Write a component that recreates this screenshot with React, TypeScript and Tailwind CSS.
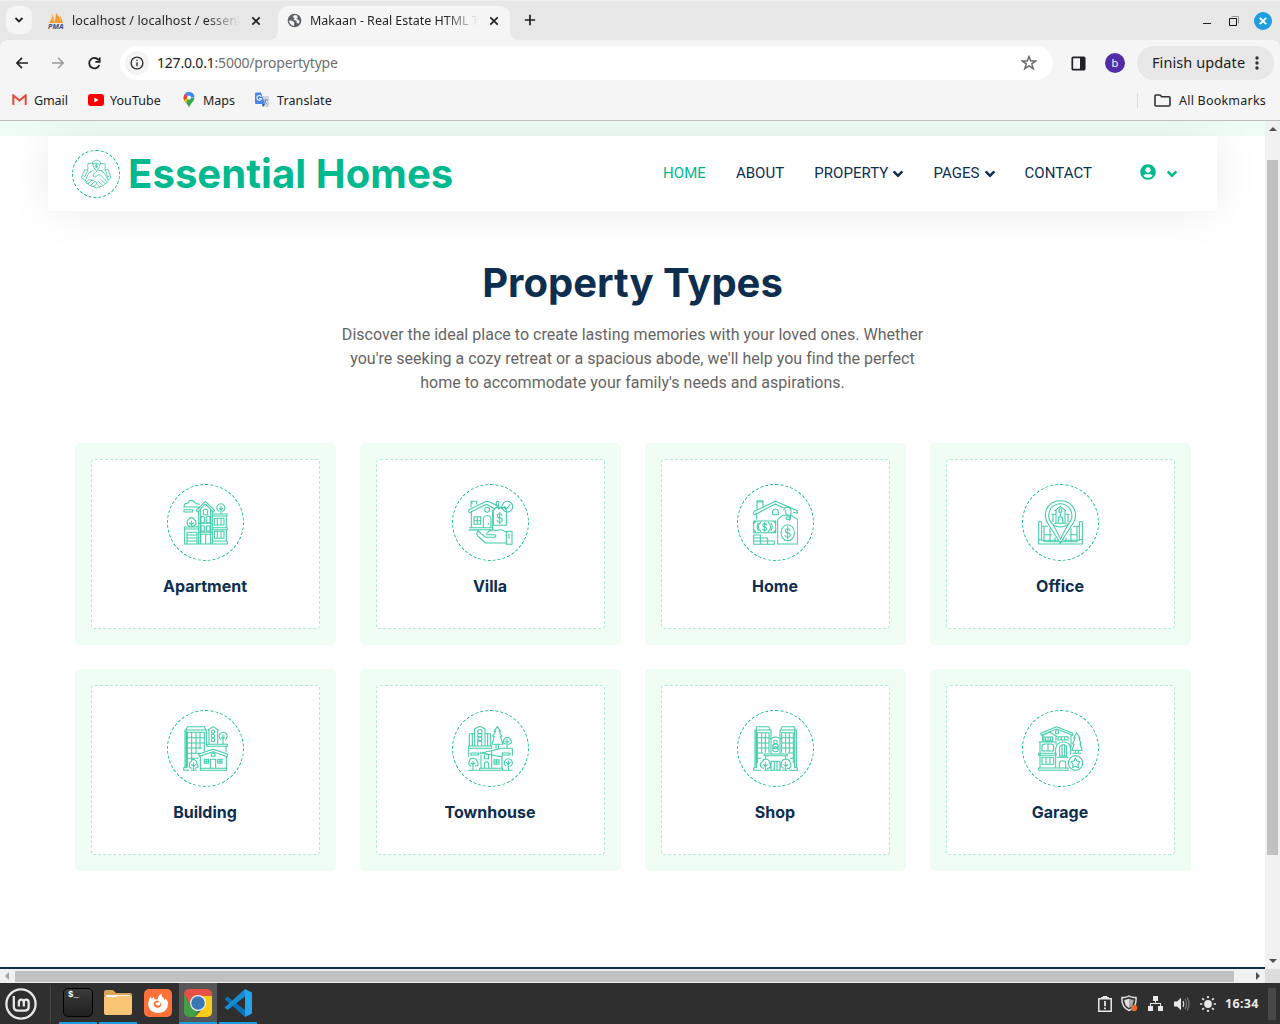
import React from "react";
import { FaAngleDown, FaUserCircle } from "react-icons/fa";

const ui = "font-['Noto_Sans',sans-serif]";

type LineProps = { box: string; d: string; size?: string; width?: number };

function LineIcon({ box, d, size = "size-[45px]", width = 3.2 }: LineProps) {
  return (
    <svg viewBox={box} className={`${size} text-[#00B98E]/75`} fill="none" stroke="currentColor" strokeWidth={width} strokeLinejoin="round" strokeLinecap="round">
      <path d={d} />
    </svg>
  );
}

const TOP = "99 90 135 135";
const LOW = "99 78 135 135";

const types = [
  {
    name: "Apartment",
    box: TOP,
    d: "M101 111H150M104 111A7 7 0 0 1 108 100Q113 101 115 98A10 10 0 0 1 134 98Q138 101 148 103M102 119H128M102 126H128M128 119V126M102 119V126M139 121L166 94 194 121 190 126 166 102 143 126ZM146 124V222M187 122V222M151 120V222M182 120V222M160 134V124A6 6 0 0 1 173 124V134ZM153 158V144A5 5 0 0 1 163 144V158ZM169 158V144A5 5 0 0 1 180 144V158ZM153 183V168H163V183ZM169 183V168H180V183ZM146 160H187M146 187H187M152 222V193H182V222M167 193V222M188 132H231V138H188M188 173H232V179H188M188 213H232V222H188M229 138V173M229 179V213M193 145H222V165H193ZM202 145V165M213 145V165M193 184H222V205H193ZM202 184V205M213 184V205M103 171H146V177H103ZM104 177V222M111 187H141V222H111ZM111 195H141M111 204H141M111 213H141M103 222H232M119 168A8 8 0 0 1 112 158Q109 151 116 149A9 9 0 0 1 133 149Q140 153 137 163Q134 169 127 168M124 153V171M118 159L124 164 130 159M207 124A12 12 0 1 1 218 124M213 109V132M208 115L213 120 218 115",
  },
  {
    name: "Villa",
    box: TOP,
    d: "M108 111V94H125V102M111 99V94M102 119L151 95Q156 92 162 95L190 109M102 119Q100 125 103 128L155 103 178 116M109 126V171M104 173H173V179H102M173 120V171M117 140H137V163H117ZM127 140V163M117 152H137M145 172V148A11 11 0 0 1 168 148V172M160 160V163M149 119A7 7 0 1 1 164 119A7 7 0 1 1 149 119M175 121L183 112H208L214 121V166H175ZM191 117A4 4 0 1 1 198 117M194 116Q181 107 184 97Q187 91 192 96L190 107M201 136Q200 131 194 131Q187 131 187 137Q187 143 194 143Q202 143 202 150Q201 157 194 157Q187 157 186 151M194 127V161M201 110A16 16 0 1 1 233 110A16 16 0 1 1 201 110M209 110L215 116 225 104M102 180H127L151 202H179Q187 197 179 194H155M155 190L163 183Q175 178 183 182L191 180Q201 177 210 185H219M128 185Q121 193 132 201L151 219H214M214 184H231V223H214ZM222 191V205",
  },
  {
    name: "Home",
    box: TOP,
    d: "M111 116V92H129V107M111 96H129M102 124L166 94 232 122V130L220 127M102 124Q99 132 104 134L166 102 190 113M110 132V147M158 134V123A9 9 0 0 1 175 123V134ZM101 153H167V188H101ZM101 161L109 153M101 179L109 188M160 153L167 161M160 188L167 180M115 159Q108 171 115 181M153 159Q160 171 153 181M122 157Q108 170 122 184M145 157Q159 170 145 184M140 164Q134 158 129 163Q127 170 134 171Q142 173 139 179Q134 184 128 178M134 158V184M101 195H121V223H101ZM101 204H143V223M101 213H163V223H101M121 213V223M143 213V223M173 148L188 136H214L233 149V222H173ZM183 188A20 24 0 1 0 223 188A20 24 0 1 0 183 188M210 181Q209 176 203 176Q196 176 196 182Q196 188 203 189Q211 190 211 196Q210 202 203 202Q196 202 195 196M203 171V207M199 149A6 6 0 1 1 208 151M192 121Q191 113 201 112Q214 113 213 125L211 143Q208 150 203 148M197 121V131L204 137",
  },
  {
    name: "Office",
    box: TOP,
    d: "M166 220L129 161Q117 143 123 122Q133 92 166 92Q198 92 209 120Q215 140 206 157ZM131 136A35 35 0 1 1 201 136A35 35 0 1 1 131 136M137 153Q160 190 166 208 177 184 195 154M150 122L166 109 182 122M153 121V160H180V121M140 133H153M180 133H193M144 134V155M189 134V155M162 126V120A4 4 0 0 1 170 120V126ZM160 160V147A6 6 0 0 1 173 147V160M166 126V141M149 160H184M101 155V222H232V155M101 157A5 4 0 0 1 110 157V211H158M232 157A5 4 0 0 0 223 157V211H175M111 169H128M205 169H223M117 170V215H216V170M117 194H139M195 194H216M135 176V215M198 176V215M150 203V215M183 204V215M101 213Q101 206 110 210M232 213Q232 206 223 210",
  },
  {
    name: "Building",
    box: LOW,
    d: "M105 90H169V134M109 88L112 80H163L167 89M105 90V203M109 93V203M112 97H163V152M112 97V200M112 113H163M112 129H163M112 144H154M112 160H148M112 175H144M125 97V184M138 97V160M150 97V147M174 90L189 80 205 90M177 90V132M203 90V132M184 95A5 5 0 1 1 194 95A5 5 0 1 1 184 95M184 108A5 5 0 1 1 194 108A5 5 0 1 1 184 108M184 120A5 5 0 1 1 194 120A5 5 0 1 1 184 120M171 133H232V139H171ZM228 139V155M213 119A12 12 0 1 1 226 119M219 104V131M214 112L219 116 224 112M146 162L189 148 232 162V170L189 155 148 169ZM151 170V205M229 170V205M151 205H230V211H151ZM181 205V178H197V205M163 178H176V190H163ZM203 178H216V190H203ZM169 178V190M210 178V190M163 184H176M203 184H216M184 169V163A6 5 0 0 1 195 163V169ZM101 211V205Q101 201 107 202M101 211H116M124 211H139M126 205Q115 203 119 192Q117 187 124 185Q127 174 137 181Q142 187 140 191Q151 202 136 205M131 188V211M125 194L131 199 137 194",
  },
  {
    name: "Townhouse",
    box: "954 78 135 135",
    d: "M958 137V101H973M1006 101H1021V137M974 86L989 79 1005 86V92M974 86V137M1005 91V137M983 95A6 6 0 1 1 996 95A6 6 0 1 1 983 95M983 106A6 6 0 1 1 996 106A6 6 0 1 1 983 106M983 117A6 6 0 1 1 996 117A6 6 0 1 1 983 117M983 137V127A6 6 0 0 1 995 127V137M967 101V137M1013 101V137M956 138H1025V145H956ZM956 145V169M1087 148V166M963 159H986V165H963ZM1057 159H1080V165H1057ZM991 160L1056 145H1087M993 165V205M991 158L1057 171M1025 153V205M1056 168V205M989 205H1058V211H989ZM1003 205V190A7 7 0 0 1 1016 190V205M1003 176V167A7 7 0 0 1 1016 167V176ZM1032 179H1047V193H1032ZM1039 179V193M1032 186H1047M1042 80L1032 94H1037L1028 109H1033L1026 133H1059L1051 109H1056L1047 94H1052ZM1038 134V145M1045 134V145M1066 132A8 8 0 0 1 1060 122Q1062 120 1063 118A9 9 0 0 1 1080 118Q1091 130 1075 133M1071 117V145M1065 124L1071 128 1077 124M963 198Q953 194 958 185Q958 176 967 175Q979 175 981 184Q990 197 975 198M969 184V211M963 189L969 194 975 189M1068 198A12 12 0 1 1 1082 198M1075 182V211M1069 188L1075 193 1081 188M956 211H986M1061 211H1086",
  },
  {
    name: "Shop",
    box: LOW,
    d: "M105 90H153V112M180 112V90H229M109 89V82Q109 80 112 80H147L150 89M183 89L186 80H222L226 89M105 90V202M229 90V202M109 93V202M224 93V202M112 98H147V157M112 98V188M220 98V188M185 98H220M185 98V157M112 113H147M112 129H147M112 144H147M112 159H128M185 113H220M185 129H220M185 144H220M205 159H220M125 98V157M136 98V157M197 98V157M208 98V157M112 175H122M211 175H220M150 116L167 110 183 116M153 117V160M180 117V160M161 126A5 5 0 1 1 172 126A5 5 0 1 1 161 126M158 139A8 7 0 1 1 175 139A8 7 0 1 1 158 139M158 148A8 7 0 1 1 175 148A8 7 0 1 1 158 148M132 162H202V167H132ZM137 168V174M197 168V174M153 211V184H180V211M163 184V211M171 184V211M101 211V205Q102 202 109 203M232 211V205Q231 202 224 203M101 211H123M134 211H146M151 211H182M187 211H201M207 211H232M130 205Q119 202 122 192Q121 187 128 185Q129 177 137 177Q148 178 148 187Q157 204 141 206M136 187V211M130 194L136 199 142 194M192 205Q181 202 184 192Q184 178 197 177Q208 178 210 187Q218 204 202 206M197 187V211M191 194L197 199 203 194",
  },
  {
    name: "Garage",
    box: "954 78 135 135",
    d: "M962 100L1010 80 1058 100V106L1010 87 964 106ZM968 105L989 97 1010 109M968 105V124M1053 106V141M972 108V124M1008 108V122M977 111H998V123H977ZM984 111V123M991 111V123M1014 110H1044V120H1014ZM1024 110V120M1034 110V120M1006 97A5 5 0 1 1 1016 97A5 5 0 1 1 1006 97M958 126H1008V132M960 126V202M956 160H1008V166H956ZM966 153V140Q966 132 975 132H993Q1001 132 1001 140V153ZM984 132V153M966 172H1001V193H966ZM978 172V193M990 172V193M1007 203V145Q1010 126 1030 126Q1050 126 1052 145V163M1019 168V143Q1019 134 1030 134Q1040 134 1040 143V168ZM1026 135V168M1034 135V168M1011 172H1044M1018 205V190Q1019 182 1028 182Q1037 182 1037 190V205M956 204H1044V211H956ZM1045 189A21.5 21.5 0 1 1 1088 189A21.5 21.5 0 1 1 1045 189M1066 175L1071 183 1080 185 1074 193 1075 203 1066 199 1058 203 1059 193 1053 185 1062 183ZM1070 98L1061 114H1065L1058 132H1062L1056 151H1087L1080 132H1083L1077 114H1080ZM1066 152V159M1075 152V159M1059 160H1083",
  },
];

function TypeCard({ name, box, d }: { name: string; box: string; d: string }) {
  return (
    <a className="block h-[202px] rounded-[5px] bg-[#EFFDF5] p-4">
      <div className="flex h-[170px] flex-col items-center rounded-[4px] border border-dashed border-[#00B98E]/30 bg-white pt-6">
        <div className="flex size-[77px] items-center justify-center rounded-full border border-dashed border-[#00B98E]">
          <LineIcon box={box} d={d} />
        </div>
        <h6 className="mt-4 font-['Inter',sans-serif] text-base leading-[19px] font-bold text-[#0E2E50]">{name}</h6>
      </div>
    </a>
  );
}

function Cross() {
  return (
    <svg viewBox="0 0 10 10" className="size-[10px] shrink-0" stroke="#202124" strokeWidth="1.7">
      <path d="M1.3 1.3 8.7 8.7M8.7 1.3 1.3 8.7" />
    </svg>
  );
}

function TabStrip() {
  return (
    <div className="flex h-10 border-t border-[#efefef] bg-[#e7e7e7] text-[12.5px] text-[#202124]">
      <div className="mt-[5px] ml-[6px] flex h-7 w-[26px] items-center justify-center rounded-[9px] bg-[#f5f5f5]">
        <svg viewBox="0 0 10 10" className="size-[10px]" fill="none" stroke="#202124" strokeWidth="1.8"><path d="M1.5 3 5 6.5 8.5 3" /></svg>
      </div>
      <div className="flex w-[246px] items-center pl-4">
        <svg viewBox="0 0 16 16" className="size-4 shrink-0">
          <path d="M1 10Q4 6 5 1L6 10ZM6 10Q8 5 8 0 12 4 13 10ZM12 2Q14 6 15 10H13Z" fill="#f79a28" />
          <text x="0" y="15.8" fontSize="6.5" fontWeight="bold" fontStyle="italic" fill="#4b4b78" fontFamily="Noto Sans" textLength="15.5" lengthAdjust="spacingAndGlyphs">PMA</text>
        </svg>
        <span className="ml-2 w-[168px] overflow-hidden bg-gradient-to-r from-[#202124] from-80% to-transparent bg-clip-text pt-px whitespace-nowrap text-transparent tracking-[0.12px]">localhost / localhost / essential</span>
        <span className="ml-[11px]"><Cross /></span>
      </div>
      <div className="relative mt-[5px] flex h-[34px] w-[232px] items-center rounded-t-[10px] bg-[#f5f5f5] pb-[5px] pl-[9px]">
        <svg viewBox="0 0 10 10" className="absolute bottom-0 -left-[10px] size-[10px]"><path d="M10 0V10H0Q10 10 10 0" fill="#f5f5f5" /></svg>
        <svg viewBox="0 0 10 10" className="absolute -right-[10px] bottom-0 size-[10px]"><path d="M0 0V10H10Q0 10 0 0" fill="#f5f5f5" /></svg>
        <svg viewBox="0 0 16 16" className="size-[15px] shrink-0">
          <circle cx="8" cy="8" r="7.3" fill="#5f6368" />
          <path d="M8 2.2 6 4.3 8.2 5.5 7 7.3 10.5 8.5 10 10.2 12 11.5 13.5 9.2 12 7 9.6 6.5 11.5 5 10.7 2.7ZM2.2 8 5.5 8.3 7.8 10.2 7.5 13.6 5 13 2.5 10.5Z" fill="#f5f5f5" />
        </svg>
        <span className="ml-2 w-[168px] overflow-hidden bg-gradient-to-r from-[#202124] from-80% to-transparent bg-clip-text pt-px whitespace-nowrap text-transparent tracking-[-0.02px]">Makaan - Real Estate HTML Template</span>
        <span className="ml-[11px]"><Cross /></span>
      </div>
      <svg viewBox="0 0 12 12" className="mt-[13px] ml-[14px] size-3" stroke="#202124" strokeWidth="1.7"><path d="M6 .8V11.2M.8 6H11.2" /></svg>
      <div className="ml-auto flex items-center gap-[18px] pr-2">
        <span className="mt-[5px] h-px w-2 bg-[#202124]" />
        <svg viewBox="0 0 10 10" className="size-[10px]" fill="none"><path d="M.5 2.5H7.5V9.5H.5Z" stroke="#111" /><path d="M2.5.5H9.5V7.5" stroke="#999" /></svg>
        <span className="-ml-[3px] flex size-[18px] items-center justify-center rounded-full bg-[#1f9ede]">
          <svg viewBox="0 0 8 8" className="size-2" stroke="white" strokeWidth="1.9"><path d="M.8.8 7.2 7.2M7.2.8.8 7.2" /></svg>
        </span>
      </div>
    </div>
  );
}

function Toolbar() {
  return (
    <div className="flex h-[46px] items-center bg-[#f5f5f5] text-[#202124]">
      <svg viewBox="0 0 12 12" className="ml-4 size-3" fill="none" stroke="#202124" strokeWidth="1.7"><path d="M12 6H1.2M6 .8.9 6 6 11.2" /></svg>
      <svg viewBox="0 0 12 12" className="ml-6 size-3" fill="none" stroke="#9a9a9a" strokeWidth="1.5"><path d="M0 6H10.8M6 .8 11.1 6 6 11.2" /></svg>
      <svg viewBox="0 0 13 13" className="ml-6 size-[13px]" fill="none" stroke="#202124" strokeWidth="1.8"><path d="M11.3 8A5.2 5.2 0 1 1 10.7 3.2M11.7.6V4.9H7.4" /></svg>
      <div className="ml-[19px] flex h-[34px] w-[933px] items-center rounded-full bg-white pl-[5px]">
        <span className="flex size-6 items-center justify-center rounded-full bg-[#f4f4f4]">
          <svg viewBox="0 0 14 14" className="size-[14px]" fill="none" stroke="#303134" strokeWidth="1.4"><circle cx="7" cy="7" r="5.9" /><path d="M7 6.2V10.2M7 3.7V5.1" /></svg>
        </span>
        <span className="mb-[2px] ml-2 text-[14px] tracking-[-0.2px] text-[#202124]">127.0.0.1<span className="text-[#6d6e70]">:5000/propertytype</span></span>
        <svg viewBox="0 0 16 16" className="mr-4 ml-auto size-4" fill="none" stroke="#6b6b6b" strokeWidth="1.5"><path d="M8 1.6 9.8 6H14.6L10.8 8.9 12.2 13.7 8 10.9 3.8 13.7 5.2 8.9 1.4 6H6.2Z" /></svg>
      </div>
      <svg viewBox="0 0 15 15" className="ml-[18px] size-[15px]"><rect x="1.3" y="1.3" width="12.4" height="12.4" rx="1" fill="none" stroke="#202124" strokeWidth="1.7" /><path d="M9 1H14V14H9Z" fill="#202124" /></svg>
      <span className="ml-[19px] flex size-5 items-center justify-center rounded-full bg-[#512da8] text-[11px] text-white">b</span>
      <div className="ml-3 flex h-[34px] w-[137px] items-center rounded-full bg-[#e7e7e7] pl-[15px]">
        <span className="text-[14.5px] tracking-[0.09px] whitespace-nowrap">Finish update</span>
        <svg viewBox="0 0 4 14" className="mr-[15px] ml-auto h-[14px] w-1" fill="#303134"><circle cx="2" cy="2" r="1.7" /><circle cx="2" cy="7" r="1.7" /><circle cx="2" cy="12" r="1.7" /></svg>
      </div>
    </div>
  );
}

function Bookmarks() {
  return (
    <div className="flex h-[35px] items-center border-b border-[#bdbdbd] bg-[#f5f5f5] pb-[6px] text-[12.5px] text-[#202124]">
      <div className="flex w-[76px] items-center gap-[7px] pl-3">
        <svg viewBox="0 0 15 12" className="h-[12px] w-[15px] shrink-0"><path d="M1 1H14V11H1Z" fill="#eee" /><path d="M1.3 11V1.4L7.5 6.5 13.7 1.4V11" fill="none" stroke="#e04a3f" strokeWidth="2" /></svg>
        <span className="mt-[2px] tracking-[-0.1px]">Gmail</span>
      </div>
      <div className="flex w-[105px] items-center gap-[6px] pl-3">
        <svg viewBox="0 0 16 12" className="h-3 w-4 shrink-0"><rect width="16" height="12" rx="3" fill="#f00" /><path d="M6.3 3.5 10.5 6 6.3 8.5Z" fill="#fff" /></svg>
        <span className="mt-[2px] tracking-[0.05px]">YouTube</span>
      </div>
      <div className="flex w-[73px] items-center gap-2 pl-[2px]">
        <svg viewBox="0 0 12 16" className="h-4 w-3 shrink-0">
          <path d="M6 16C5 11 .5 10 .5 5.5L11.5 5.5C11.5 10 7 11 6 16" fill="#34a853" />
          <path d="M1 7.5 6 5.5 3 11Q1.5 9 1 7.5" fill="#fbbc04" />
          <path d="M.5 5.5A5.5 5.5 0 0 1 2 1.7L6 5.5 1 8Z" fill="#ea4335" />
          <path d="M2 1.7A5.5 5.5 0 0 1 11.5 5L6 5.5Z" fill="#4285f4" />
          <circle cx="6" cy="5.5" r="2" fill="#fff" />
        </svg>
        <span className="mt-[2px]">Maps</span>
      </div>
      <div className="flex items-center gap-[7px]">
        <svg viewBox="0 0 16 16" className="size-4 shrink-0">
          <path d="M6 4H14Q15 4 15 5V14Q15 15 14 15H9Z" fill="#d3d6dc" /><path d="M9.5 8H14M12 7V8Q11.5 11 9.5 12M10.5 9.5 13.5 12.5" stroke="#7890a8" strokeWidth=".9" fill="none" />
          <path d="M2 .5H7L11 12H2Q1 12 1 11V1.5Q1 .5 2 .5" fill="#4a87ec" /><path d="M8 12H11L9 15Z" fill="#2858b8" />
          <path d="M7.2 4.7A2.3 2.3 0 1 0 7.4 6.5H5.3" stroke="#fff" strokeWidth="1.1" fill="none" />
        </svg>
        <span className="mt-[2px] tracking-[0.12px]">Translate</span>
      </div>
      <div className="ml-auto flex items-center pr-[14px]">
        <span className="mr-4 h-[15px] w-px bg-[#dcdcdc]" />
        <svg viewBox="0 0 17 13" className="h-[13px] w-[17px]" fill="none" stroke="#303134" strokeWidth="1.6"><path d="M1 2Q1 1 2 1H6L7.7 2.8H15Q16 2.8 16 3.8V11Q16 12 15 12H2Q1 12 1 11Z" /></svg>
        <span className="mt-[2px] ml-2 tracking-[0.22px]">All Bookmarks</span>
      </div>
    </div>
  );
}

const navLink = "flex items-center gap-[5px]";

function SiteHeader() {
  return (
    <header className="mx-12 flex h-[75px] w-[1169px] items-center bg-white px-6 shadow-[0_0_45px_rgba(0,0,0,0.08)]">
      <div className="flex size-12 items-center justify-center rounded-full border border-dashed border-[#00B98E]">
        <LineIcon
          box="121 146 92 92"
          size="size-[30px]"
          width={2.4}
          d="M156 160V156Q168 143 181 156V161M158 160H142V180L133 178 122 204 134 211M180 160H195V180L204 178 213 204 204 211M158 164Q159 178 168 181Q178 176 179 164L168 158ZM168 161V173M164 165H172M164 170H172M134 211L144 191 152 183M204 211L194 191 184 182 174 180 162 189Q155 196 160 201Q166 202 173 195H181L202 217M134 211Q139 213 136 219Q138 225 145 220Q142 228 152 226Q151 234 160 230Q160 235 168 235L176 232 186 229 194 223 202 217M145 220L154 210Q145 206 136 217M152 226L163 214Q158 209 153 212M160 230L171 220Q168 214 163 216M177 230L169 222M185 226L175 215M194 220L181 208M142 180L133 200 128 197M195 180L203 202 209 198M148 188L158 181M188 187L182 182"
        />
      </div>
      <h1 className="ml-2 font-['Inter',sans-serif] text-[40px] leading-[48px] font-bold tracking-[0.09px] whitespace-nowrap text-[#00B98E]">Essential Homes</h1>
      <nav className="ml-auto flex items-center gap-[30px] pr-4 font-['Roboto',sans-serif] text-[15px] font-[450] tracking-[0.05px] text-[#0E2E50]">
        <a className="text-[#00B98E]">HOME</a>
        <a>ABOUT</a>
        <a className={navLink}>PROPERTY<FaAngleDown className="mt-px size-[10px] scale-[1.6]" /></a>
        <a className={navLink}>PAGES<FaAngleDown className="mt-px size-[10px] scale-[1.6]" /></a>
        <a>CONTACT</a>
        <a className="ml-[18px] flex items-center gap-[11px] text-[#00B98E]"><FaUserCircle className="mb-[3px] size-4" /><FaAngleDown className="mt-px size-[10px] scale-[1.6]" /></a>
      </nav>
    </header>
  );
}

function Page() {
  return (
    <main className="relative flex w-[1265px] flex-col overflow-hidden bg-white">
      <div className="h-[15px] shrink-0 bg-[#EFFDF5]" />
      <SiteHeader />
      <section className="flex flex-col items-center pt-12">
        <h2 className="font-['Inter',sans-serif] text-[40px] leading-[48px] font-bold text-[#0E2E50]">Property Types</h2>
        <p className="mt-4 w-[600px] text-center font-['Roboto',sans-serif] text-base leading-6 tracking-[0.02px] text-[#666565]">
          Discover the ideal place to create lasting memories with your loved ones. Whether you're seeking a cozy retreat or a spacious abode, we'll help you find the perfect home to accommodate your family's needs and aspirations.
        </p>
        <div className="mt-12 grid w-[1116px] grid-cols-4 gap-6">
          {types.map((t) => <TypeCard key={t.name} {...t} />)}
        </div>
      </section>
      <footer className="mt-auto h-[2px] shrink-0 bg-[#0E2E50]" />
    </main>
  );
}

function Scrollbar() {
  return (
    <div className="flex w-[15px] flex-col items-center bg-[#f1f1f1]">
      <svg viewBox="0 0 8 4" className="mt-[6px] h-1 w-2" fill="#505050"><path d="M0 4 4 0 8 4Z" /></svg>
      <div className="mt-[29px] h-[695px] w-[11px] bg-[#c1c1c1]" />
      <svg viewBox="0 0 8 4" className="mt-auto mb-[6px] h-1 w-2" fill="#505050"><path d="M0 0 4 4 8 0Z" /></svg>
    </div>
  );
}

function HorizontalBar() {
  return (
    <div className="flex h-[14px] items-center bg-[#f1f1f1]">
      <svg viewBox="0 0 4 8" className="ml-[5px] h-2 w-1" fill="#a3a3a3"><path d="M4 0 0 4 4 8Z" /></svg>
      <div className="ml-[6px] h-[11px] w-[1219px] bg-[#c1c1c1]" />
      <svg viewBox="0 0 4 8" className="ml-[22px] h-2 w-1" fill="#505050"><path d="M0 0 4 4 0 8Z" /></svg>
      <div className="ml-auto h-full w-[15px] bg-[#dcdcdc]" />
    </div>
  );
}

function Launcher({ children, open = true, active = false }: { children: React.ReactNode; open?: boolean; active?: boolean }) {
  return (
    <div className={`flex h-[41px] w-[38px] items-center justify-center border-b-2 ${active ? "bg-[#565656]" : ""} ${open ? "border-[#1f9ede]" : "border-transparent"}`}>{children}</div>
  );
}

function Taskbar() {
  return (
    <div className="flex h-[41px] items-center bg-[#2f2f2f]">
      <svg viewBox="0 0 32 32" className="ml-[5px] size-8 shrink-0" fill="none" stroke="#e8e8e8" strokeWidth="2.6">
        <circle cx="16" cy="16" r="14.6" strokeWidth="2.3" />
        <path d="M8.8 8V18.5Q8.8 22.6 13 22.6H19.5Q23.7 22.6 23.7 18.5V14.5Q23.7 11.7 21.2 11.7T18.8 14.5V18.5M18.8 14.5Q18.8 11.7 16.3 11.7T13.9 14.5V18.5" strokeWidth="2.3" />
      </svg>
      <div className="mr-2 ml-[13px] h-[38px] w-px bg-[#484848]" />
      <div className="flex gap-[2px]">
        <Launcher>
          <div className="flex h-[29px] w-[30px] rounded-[5px] border border-black bg-gradient-to-b from-[#3b3b3b] to-[#202020] pl-[4px] font-['Liberation_Mono',monospace] text-[9px] leading-[13px] font-bold text-white">$_</div>
        </Launcher>
        <Launcher>
          <svg viewBox="0 0 30 28" className="h-7 w-[30px]"><path d="M1 3Q1 1 3 1H10L13 4H27Q29 4 29 6V15H1Z" fill="#dca555" /><path d="M3 6H27V9H3Z" fill="#f7f7f7" /><path d="M1 9Q1 8 2 8H12L15 7H28Q29 7 29 8V24Q29 26 27 26H3Q1 26 1 24Z" fill="#f7c574" /></svg>
        </Launcher>
        <Launcher open={false}>
          <svg viewBox="0 0 28 28" className="size-7">
            <rect width="28" height="28" rx="5" fill="#ff7139" />
            <path d="M14 24C8 24 4.3 20 4.3 15 4.3 11.5 5.5 9.5 7 7.5L7.5 10 9.7 7.8 10.5 10.3 13.5 10.5C14 8 15 5.5 17.5 4.5 17 8 20 8.5 20.5 11L21.7 9.5C23 11 24 12.5 24 15 24 20 20 24 14 24Z" fill="#fff" />
            <path d="M13.5 11.5 15.5 12.2 13.5 13.4C11.5 13.6 11 14.4 12 15.8 13 17 15.5 17 16.2 15.2 16.6 14 16 13 17 13.7 18 17 16 18.8 13.8 18.8 11 18.8 9.4 17 9.5 14.6 10 13 11.5 11.7 13.5 11.5Z" fill="#ff7139" />
          </svg>
        </Launcher>
        <Launcher active>
          <svg viewBox="0 0 28 28" className="size-7">
            <defs><clipPath id="tile"><rect width="28" height="28" rx="5" /></clipPath></defs>
            <g clipPath="url(#tile)">
              <path d="M0 0H28V9H14L7 17 0 5Z" fill="#e84f45" />
              <path d="M0 5 7.3 18 14 22 11 28H0Z" fill="#43a047" />
              <path d="M14 7H28V28H11L21 17Z" fill="#f8cd18" />
            </g>
            <circle cx="14" cy="14" r="8" fill="#f3f3f3" /><circle cx="14" cy="14" r="6.8" fill="#3a78b5" />
          </svg>
        </Launcher>
        <Launcher>
          <svg viewBox="0 0 28 28" className="size-7"><path d="M.5 10 3.5 7.5 21 21V28Z" fill="#0873b9" /><path d="M.5 18.5 21 0V7.5L3.5 21Z" fill="#168bd2" /><path d="M21 0 28 3.5V24.5L21 28Z" fill="#25a4ee" /></svg>
        </Launcher>
      </div>
      <div className="ml-auto flex items-center">
        <svg viewBox="0 0 14 16" className="h-4 w-[14px]" fill="none" stroke="#e8e8e8" strokeWidth="1.5"><path d="M.8 2.8H13.2V15.2H.8Z" /><path d="M4 2.5V1.8H5.8V.8H8.2V1.8H10V2.5M7 5V10.2M7 11.5V13.2" strokeWidth="1.8" /></svg>
        <svg viewBox="0 0 17 17" className="ml-[9px] size-[17px]"><path d="M8 1Q5 3 1 2.5 0 12 8 15.5 16 12 15 2.5 11 3 8 1Z" fill="none" stroke="#e0e0e0" strokeWidth="1.5" /><path d="M8 3.5Q6 4.8 3.3 4.8 3.3 10.5 8 13Z" fill="#e0e0e0" /><path d="M8 3.5Q10 4.8 12.7 4.8 12.7 10.5 8 13Z" fill="#aaa" /><circle cx="13" cy="13" r="3.2" fill="#e06b35" /></svg>
        <svg viewBox="0 0 15 15" className="ml-[10px] size-[15px]" fill="#e8e8e8"><path d="M5 0H10V5H5ZM0 10H5V15H0ZM10 10H15V15H10ZM7 5H8V7H13V10H12V8H3V10H2V7H7Z" /></svg>
        <svg viewBox="0 0 16 14" className="ml-[11px] h-[14px] w-4" fill="none"><path d="M0 4.5H3L7 .8V13.2L3 9.5H0Z" fill="#e8e8e8" /><path d="M9 4Q10.5 7 9 10" stroke="#ddd" strokeWidth="1.3" /><path d="M11 2Q14 7 11 12M13 .5Q17 7 13 13.5" stroke="#777" strokeWidth="1.2" /></svg>
        <svg viewBox="0 0 16 16" className="ml-[10px] size-4" stroke="#e8e8e8" strokeWidth="1.7"><circle cx="8" cy="8" r="3.9" fill="#e8e8e8" stroke="none" /><path d="M8 0V2.3M8 13.7V16M0 8H2.3M13.7 8H16M2.3 2.3 3.9 3.9M12.1 12.1 13.7 13.7M13.7 2.3 12.1 3.9M3.9 12.1 2.3 13.7" /></svg>
        <span className="mt-px ml-[9px] w-[35px] text-[12.5px] font-bold tracking-[0.3px] whitespace-nowrap text-[#e8e8e8]">16:34</span>
        <div className="ml-2 h-8 w-2 bg-[#484848]" />
        <div className="w-1" />
      </div>
    </div>
  );
}

export default function App() {
  return (
    <div className={`flex h-[1024px] w-[1280px] flex-col overflow-hidden ${ui}`}>
      <div className="bg-[#e7e7e7]">
        <TabStrip />
        <div className="overflow-hidden rounded-t-[8px]"><Toolbar /></div>
        <Bookmarks />
      </div>
      <div className="flex h-[848px]">
        <Page />
        <Scrollbar />
      </div>
      <HorizontalBar />
      <Taskbar />
    </div>
  );
}
